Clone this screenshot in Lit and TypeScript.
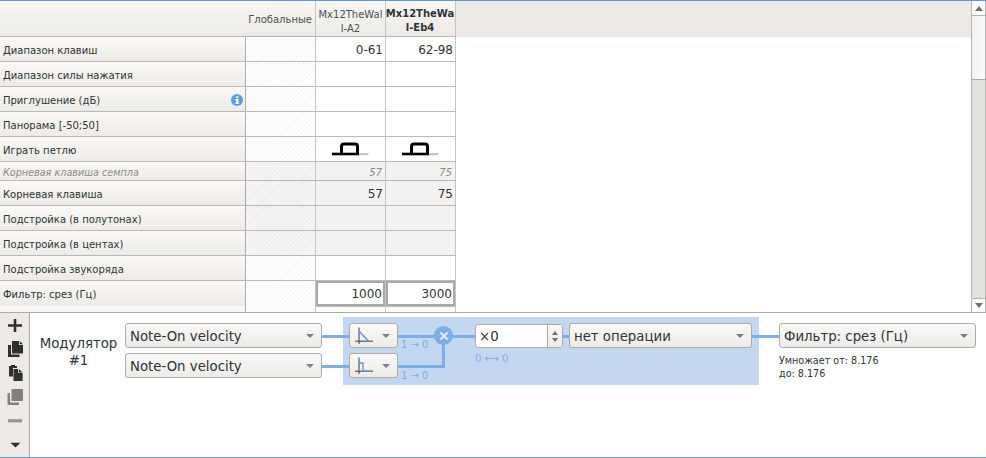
import { LitElement, html, css, svg, nothing } from "lit";
import { customElement } from "lit/decorators.js";

type Row = {
  label: string;
  info?: boolean;
  short?: boolean;
  italic?: boolean;
  tone?: "gray";
  loop?: boolean;
  boxed?: boolean;
  values?: [string, string];
};

const rows: Row[] = [
  { label: "Диапазон клавиш", values: ["0-61", "62-98"] },
  { label: "Диапазон силы нажатия" },
  { label: "Приглушение (дБ)", info: true },
  { label: "Панорама [-50;50]" },
  { label: "Играть петлю", loop: true },
  { label: "Корневая клавиша семпла", short: true, italic: true, tone: "gray", values: ["57", "75"] },
  { label: "Корневая клавиша", tone: "gray", values: ["57", "75"] },
  { label: "Подстройка (в полутонах)", tone: "gray" },
  { label: "Подстройка (в центах)", tone: "gray" },
  { label: "Подстройка звукоряда" },
  { label: "Фильтр: срез (Гц)", boxed: true, values: ["1000", "3000"] },
  { label: "" },
];

const loopIcon = html`<svg class="loop" width="37" height="14" viewBox="0 0 37 14">
  <path d="M0 12H27" stroke="#000" stroke-width="2.6" fill="none" />
  <path d="M9.5 12V4.5Q9.5 2 12 2H23Q25.5 2 25.5 4.5V12" stroke="#000" stroke-width="3" fill="none" />
  <path d="M27 11H37L35.5 13.3H27Z" fill="#c4c4c4" />
</svg>`;

const icons = {
  plus: svg`<path d="M6.7 2h2.6v5.2H15v2.6H9.3V15H6.7V9.8H1V7.2h5.7z" />`,
  copy: svg`<path d="M5 0h7v4h4v8.5H5z M12.8 0L16 3.2h-3.2z M1 4h3v9.5h8.5V16H1z" />`,
  paste: svg`<path d="M2 1h2V0h4v1h2v2H6v8.5H2z M6.5 4H11v4h4.6v8H6.5z M11.8 4l3.8 3.4h-3.8z" />`,
  dup: svg`<path d="M5.5 0H15a1 1 0 0 1 1 1v10a1 1 0 0 1-1 1H4.5V1a1 1 0 0 1 1-1z M0.5 5a1 1 0 0 1 1-1H3v9.5h9V16H1.5a1 1 0 0 1-1-1z" />`,
  minus: svg`<path d="M1 6.2h14v3.2H1z" />`,
  down: svg`<path d="M3.5 5.8h10l-5 4.7z" />`,
};

@customElement("app-select")
export class AppSelect extends LitElement {
  static override styles = css`
    :host {
      display: flex;
      align-items: center;
      box-sizing: border-box;
      height: 25px;
      padding: 0 5px 0 4px;
      border: 1px solid #aeaca8;
      border-radius: 3px;
      background: linear-gradient(#fbf9f7, #ecebe7);
      color: #2e3436;
      font-size: 13.3px;
      white-space: nowrap;
    }
    .value {
      flex: 1;
      display: flex;
      align-items: center;
      padding-top: 1px;
    }
    .arrow {
      width: 0;
      height: 0;
      margin-right: 2px;
      border-left: 4px solid transparent;
      border-right: 4px solid transparent;
      border-top: 4px solid #808080;
    }
  `;

  override render() {
    return html`<span class="value"><slot></slot></span><span class="arrow"></span>`;
  }
}

@customElement("app-root")
export class AppRoot extends LitElement {
  static override styles = css`
    :host {
      display: block;
      width: 986px;
      height: 458px;
      box-sizing: border-box;
      overflow: hidden;
      background: #fff;
      border-top: 1px solid #5c9ad6;
      border-bottom: 1px solid #5c9ad6;
      font-family: "DejaVu Sans", sans-serif;
      color: #2e3436;
    }

    .top {
      display: flex;
      height: 311px;
      border-bottom: 1px solid #aeaca8;
      box-sizing: content-box;
    }
    .table {
      flex: 1;
      overflow: hidden;
      min-width: 0;
    }
    .head {
      display: grid;
      grid-template-columns: 316px 70px 70px 1fr;
      height: 36px;
      background: #ede9e4;
    }
    .head > div {
      box-sizing: border-box;
      height: 36px;
      padding-top: 6px;
      font-size: 10px;
      line-height: 14px;
      color: #4a4f50;
      background: linear-gradient(#f9f6f3, #ecebe7);
      border-bottom: 1px solid #b5b5b3;
      border-right: 1px solid #c4c4c2;
      display: flex;
      align-items: center;
      justify-content: center;
      text-align: center;
      overflow: hidden;
    }
    .head > .global {
      justify-content: flex-end;
      padding: 2px 3px 0 0;
    }
    .head > .bold {
      padding-top: 5px;
      font-weight: 700;
      color: #2e3436;
    }
    .head > .rest {
      border: 0;
      background: none;
    }
    .head .clip {
      flex: none;
      width: 69px;
      margin-left: -1px;
      white-space: pre;
      display: block;
    }

    .row {
      display: grid;
      grid-template-columns: 246px 70px 70px 70px;
      height: 25px;
    }
    .row.short {
      height: 19px;
    }
    .row > div {
      box-sizing: border-box;
      border-bottom: 1px solid #b9b9b7;
      border-right: 1px solid #c4c4c2;
      display: flex;
      align-items: center;
    }
    .row .label {
      justify-content: space-between;
      padding: 2px 2px 0 3px;
      background: linear-gradient(#fbf8f5, #ecebe7);
      border-right-color: #aeaca8;
      font-size: 10px;
      color: #2e3436;
    }
    .row.italic .label {
      font-style: italic;
      font-size: 9.65px;
      color: #8a8c8d;
    }
    .row .hatch {
      background: repeating-linear-gradient(135deg, #fff 0 2px, #f7f6f4 2px 3px);
    }
    .row.gray .hatch {
      background: repeating-linear-gradient(135deg, #f6f5f3 0 2px, #eeedeb 2px 3px);
    }
    .row .val {
      justify-content: flex-end;
      padding: 2px 2px 0 0;
      font-size: 12px;
      color: #2e3436;
    }
    .row.gray .val {
      background: #f3f2f0;
    }
    .row.italic .val {
      font-style: italic;
      font-size: 10px;
      color: #8a8c8d;
      padding-right: 3px;
    }
    .row .val.center {
      justify-content: center;
      padding: 0;
    }
    .row .val.boxed {
      padding: 0;
    }
    .box {
      flex: 1;
      align-self: stretch;
      box-sizing: border-box;
      border: 2px solid #a9a9a7;
      padding: 2px 1px 0 0;
      text-align: right;
      line-height: 19px;
    }
    .info {
      width: 12px;
      height: 12px;
      display: block;
    }

    .scroll {
      width: 15px;
      flex: none;
      display: flex;
      flex-direction: column;
      border-left: 1px solid #b5b5b3;
      border-right: 1px solid #b5b5b3;
      box-sizing: border-box;
      background: #e3e1de;
    }
    .scroll .btn {
      height: 14px;
      flex: none;
      background: #fdfcfb;
      border-bottom: 1px solid #b5b5b3;
      display: flex;
      align-items: center;
      justify-content: center;
    }
    .scroll .thumb {
      height: 63px;
      flex: none;
      background: linear-gradient(90deg, #f4f2f0, #fbfaf9);
      border-bottom: 1px solid #aeaca8;
    }
    .scroll .track {
      flex: 1;
    }
    .scroll .btn.end {
      border-top: 1px solid #b5b5b3;
      border-bottom: 0;
      height: 13px;
    }
    .tri-up,
    .tri-down {
      width: 0;
      height: 0;
      border-left: 4px solid transparent;
      border-right: 4px solid transparent;
    }
    .tri-up {
      border-bottom: 5px solid #707070;
    }
    .tri-down {
      border-top: 5px solid #707070;
    }

    .bottom {
      display: flex;
      height: 145px;
    }
    .tools {
      flex: none;
      width: 30px;
      box-sizing: border-box;
      padding: 4px 0 0 7px;
      background: #edeae5;
      border-right: 1px solid #aeaca8;
      display: flex;
      flex-direction: column;
      gap: 8px;
    }
    .tools svg {
      display: block;
      fill: #2e3030;
    }
    .tools svg.off {
      fill: #808080;
    }
    .tools svg.faint {
      fill: #949494;
    }

    .canvas {
      flex: 1;
      display: flex;
      align-items: flex-start;
      position: relative;
    }
    .wires {
      position: absolute;
      left: 0;
      top: 0;
      pointer-events: none;
    }
    .title {
      flex: none;
      box-sizing: border-box;
      width: 95px;
      margin-top: 22px;
      padding-left: 2px;
      text-align: center;
      font-size: 13.3px;
      line-height: 17px;
    }
    .sources {
      flex: none;
      width: 197px;
      margin-top: 10px;
      display: flex;
      flex-direction: column;
      gap: 5px;
    }
    .panel {
      flex: none;
      position: relative;
      box-sizing: border-box;
      width: 416px;
      height: 68px;
      margin: 4px 0 0 21px;
      padding: 6px 7px 0 6px;
      background: #c3d8f0;
      display: flex;
      align-items: flex-start;
    }
    .curves {
      flex: none;
      width: 49px;
      display: flex;
      flex-direction: column;
      gap: 5px;
    }
    .curves svg {
      display: block;
    }
    .hint {
      position: absolute;
      font-size: 10px;
      color: #7eaee6;
      white-space: nowrap;
    }
    .hint.a {
      left: 58px;
      top: 22px;
    }
    .hint.b {
      left: 58px;
      top: 53px;
    }
    .hint.c {
      left: 132px;
      top: 36px;
    }
    .mult {
      flex: none;
      width: 19px;
      height: 19px;
      margin: 3px 22px 0 36px;
      border-radius: 50%;
      background: #7eaee6;
      position: relative;
      z-index: 1;
      display: flex;
      align-items: center;
      justify-content: center;
    }
    .spin {
      flex: none;
      box-sizing: border-box;
      width: 88px;
      height: 24px;
      margin-top: 1px;
      border: 1px solid #aeaca8;
      border-radius: 3px;
      background: #fff;
      display: flex;
      font-size: 13.3px;
      color: #2e3436;
      overflow: hidden;
    }
    .spin .num {
      flex: 1;
      padding-left: 3px;
      line-height: 23px;
    }
    .spin .arrows {
      width: 14px;
      border-left: 1px solid #aeaca8;
      background: linear-gradient(#fbf9f7, #ecebe7);
      display: flex;
      flex-direction: column;
      align-items: center;
      justify-content: center;
      gap: 3px;
    }
    .spin .tri-up {
      border-left-width: 3.5px;
      border-right-width: 3.5px;
      border-bottom-width: 4px;
    }
    .spin .tri-down {
      border-left-width: 3.5px;
      border-right-width: 3.5px;
      border-top-width: 4px;
    }
    .op {
      flex: none;
      width: 183px;
      margin-left: 6px;
    }
    .dest {
      flex: none;
      width: 197px;
      margin: 10px 0 0 20px;
    }
    .dest .note {
      margin-top: 6px;
      font-size: 9.6px;
      line-height: 13px;
      color: #2e3436;
    }
  `;

  private renderRow(r: Row) {
    const cls = ["row", r.short ? "short" : "", r.italic ? "italic" : "", r.tone ?? ""].join(" ");
    const cell = (i: 0 | 1) => {
      if (r.loop) return html`<div class="val center">${loopIcon}</div>`;
      if (r.boxed) return html`<div class="val boxed"><span class="box">${r.values?.[i]}</span></div>`;
      return html`<div class="val">${r.values?.[i] ?? ""}</div>`;
    };
    return html`<div class=${cls}>
      <div class="label">
        <span>${r.label}</span>
        ${r.info
          ? html`<svg class="info" viewBox="0 0 12 12">
              <circle cx="6" cy="6" r="6" fill="#5b9be0" />
              <rect x="5" y="5" width="2.4" height="4.6" fill="#fff" />
              <rect x="4.2" y="5" width="1.5" height="1" fill="#fff" />
              <rect x="4.2" y="8.8" width="4" height="1" fill="#fff" />
              <rect x="5" y="2.4" width="2.4" height="1.7" fill="#fff" />
            </svg>`
          : nothing}
      </div>
      <div class="hatch"></div>
      ${cell(0)} ${cell(1)}
    </div>`;
  }

  private tool(name: keyof typeof icons, cls = "") {
    return html`<svg class=${cls} width="16" height="16" viewBox="0 0 16 16">${icons[name]}</svg>`;
  }

  private curveIcon(kind: "slope" | "step") {
    return html`<svg width="22" height="20" viewBox="0 0 22 20">
      <path d="M5 1.5V18M1 15.2H19" stroke="#3c3c3c" stroke-width="1" fill="none" />
      ${kind === "slope"
        ? svg`<path d="M5 5L15 15.5" stroke="#5b9be0" stroke-width="1.4" fill="none" />`
        : svg`<path d="M5 7H9V15.2H17" stroke="#5b9be0" stroke-width="1.3" fill="none" />`}
    </svg>`;
  }

  override render() {
    return html`
      <div class="top">
        <div class="table">
          <div class="head">
            <div class="global">Глобальные</div>
            <div>Mx12TheWal<br />l-A2</div>
            <div class="bold"><span class="clip">Mx12TheWa<br />l-Eb4</span></div>
            <div class="rest"></div>
          </div>
          ${rows.map((r) => this.renderRow(r))}
        </div>
        <div class="scroll">
          <div class="btn"><span class="tri-up"></span></div>
          <div class="thumb"></div>
          <div class="track"></div>
          <div class="btn end"><span class="tri-down"></span></div>
        </div>
      </div>
      <div class="bottom">
        <div class="tools">
          ${this.tool("plus")} ${this.tool("copy")} ${this.tool("paste")} ${this.tool("dup", "off")}
          ${this.tool("minus", "faint")} ${this.tool("down")}
        </div>
        <div class="canvas">
          <div class="title">Модулятор<br />#1</div>
          <div class="sources">
            <app-select>Note-On velocity</app-select>
            <app-select>Note-On velocity</app-select>
          </div>
          <div class="panel">
            <div class="curves">
              <app-select>${this.curveIcon("slope")}</app-select>
              <app-select>${this.curveIcon("step")}</app-select>
            </div>
            <div class="mult">
              <svg width="10" height="10" viewBox="0 0 10 10">
                <path d="M1.5 1.5L8.5 8.5M8.5 1.5L1.5 8.5" stroke="#dfeaf8" stroke-width="2.4" />
              </svg>
            </div>
            <div class="spin">
              <span class="num">×0</span>
              <span class="arrows"><span class="tri-up"></span><span class="tri-down"></span></span>
            </div>
            <app-select class="op">нет операции</app-select>
            <span class="hint a">1 → 0</span>
            <span class="hint b">1 → 0</span>
            <span class="hint c">0 ⟷ 0</span>
          </div>
          <div class="dest">
            <app-select>Фильтр: срез (Гц)</app-select>
            <div class="note">Умножает от: 8.176<br />до: 8.176</div>
          </div>
          <svg class="wires" width="956" height="100" fill="none" stroke="#7eaee6" stroke-width="3">
            <path d="M292 23.5H319M292 53.5H319" />
            <path d="M368 23.5H445" />
            <path d="M368 53.5H413.5V30" />
            <path d="M533 23.5H539M722 23.5H749" />
          </svg>
        </div>
      </div>
    `;
  }
}
